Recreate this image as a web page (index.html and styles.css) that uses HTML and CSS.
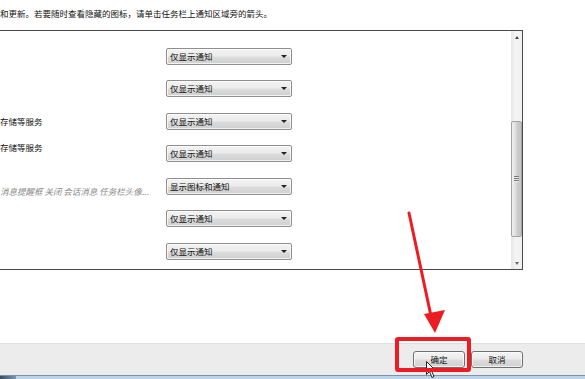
FILE: index.html
```html
<!DOCTYPE html>
<html lang="zh-CN">
<head>
<meta charset="utf-8">
<title>通知区域图标</title>
<link rel="stylesheet" href="styles.css">
</head>
<body>
<div class="page">
  <p class="intro">和更新。若要随时查看隐藏的图标，请单击任务栏上通知区域旁的箭头。</p>
  <div class="listbox">
    <div class="list">
      <div class="row"><span class="label"></span><div class="combo">仅显示通知<i class="caret"></i></div></div>
      <div class="row"><span class="label"></span><div class="combo">仅显示通知<i class="caret"></i></div></div>
      <div class="row"><span class="label">存储等服务</span><div class="combo">仅显示通知<i class="caret"></i></div></div>
      <div class="row"><span class="label label--up">存储等服务</span><div class="combo">仅显示通知<i class="caret"></i></div></div>
      <div class="row"><span class="label label--down label--hint">消息提醒框 关闭 会话消息 任务栏头像...</span><div class="combo">显示图标和通知<i class="caret"></i></div></div>
      <div class="row"><span class="label"></span><div class="combo">仅显示通知<i class="caret"></i></div></div>
      <div class="row"><span class="label"></span><div class="combo">仅显示通知<i class="caret"></i></div></div>
    </div>
    <div class="scrollbar">
      <div class="sb-btn"><i class="sb-arrow sb-arrow--up"></i></div>
      <div class="sb-track">
        <div class="sb-space sb-space--before"></div>
        <div class="sb-thumb"><span class="grip"></span></div>
        <div class="sb-space"></div>
      </div>
      <div class="sb-btn"><i class="sb-arrow sb-arrow--down"></i></div>
    </div>
  </div>
  <div class="spacer"></div>
  <div class="footer">
    <button class="btn" type="button">确定</button>
    <button class="btn" type="button">取消</button>
  </div>
  <div class="taskbar"><span class="taskbar-start"></span></div>

  <svg class="cursor" width="12" height="18" viewBox="0 0 12 18">
    <path d="M0.5 0.5 L0.5 13.5 L3.5 10.5 L6 16.5 L8 15.5 L5.5 9.8 L9.8 9.8 Z" fill="#fff" stroke="#222" stroke-width="1"/>
  </svg>
  <svg class="annotation" width="585" height="379" viewBox="0 0 585 379">
    <line x1="409" y1="213" x2="431" y2="316" stroke="#ec1c24" stroke-width="3" stroke-linecap="round"/>
    <polygon points="424,314 445,310 435,333" fill="#ec1c24"/>
    <rect x="397" y="339" width="72" height="31" rx="1" fill="none" stroke="#ec1c24" stroke-width="4"/>
  </svg>
</div>
</body>
</html>
```

FILE: styles.css
```css
* { box-sizing: border-box; }

html, body {
  margin: 0;
  padding: 0;
  background: #fff;
}

body {
  font-family: "Noto Sans CJK SC", "Noto Sans", sans-serif;
  font-size: 8.5px;
  color: #000;
  overflow: hidden;
}

.page {
  position: relative;
  width: 585px;
  height: 379px;
  display: flex;
  flex-direction: column;
  overflow: hidden;
  background: #fff;
}

.intro {
  margin: 0;
  height: 30px;
  padding-top: 7px;
  line-height: 12px;
  white-space: nowrap;
  color: #111;
}

.listbox {
  height: 240px;
  width: 524px;
  margin-left: -1px;
  border: 1px solid #4a4a4a;
  display: flex;
  background: #fff;
  flex: none;
}

.list {
  flex: 1;
  padding-top: 9px;
  display: flex;
  flex-direction: column;
}

.row {
  height: 32.5px;
  display: flex;
  align-items: center;
}

.label {
  width: 166px;
  white-space: nowrap;
  color: #111;
  line-height: 12px;
}

.label--up { margin-bottom: 14px; }
.label--down { margin-top: 10px; }
.label--hint {
  font-style: italic;
  color: #8a8a8a;
}

.combo {
  width: 126px;
  height: 17px;
  border: 1px solid #8e8f8f;
  border-radius: 2px;
  background: linear-gradient(to bottom, #f3f3f3 0%, #ebebeb 48%, #dddddd 52%, #cfcfcf 100%);
  box-shadow: inset 0 0 0 1px rgba(255,255,255,0.7);
  padding-left: 3px;
  line-height: 15px;
  color: #111;
  display: flex;
  align-items: center;
  white-space: nowrap;
}

.caret {
  margin-left: auto;
  margin-right: 4px;
  width: 0;
  height: 0;
  border-left: 3px solid transparent;
  border-right: 3px solid transparent;
  border-top: 3px solid #222;
}

.scrollbar {
  width: 11px;
  display: flex;
  flex-direction: column;
  background: linear-gradient(to right, #e6e6e6, #f4f4f4 40%, #f0f0f0);
}

.sb-btn {
  height: 12px;
  display: flex;
  align-items: center;
  justify-content: center;
}

.sb-arrow {
  width: 0;
  height: 0;
  border-left: 2.5px solid transparent;
  border-right: 2.5px solid transparent;
}
.sb-arrow--up { border-bottom: 3px solid #444; }
.sb-arrow--down { border-top: 3px solid #666; }

.sb-track {
  flex: 1;
  display: flex;
  flex-direction: column;
}

.sb-space { flex: 1; }
.sb-space--before { flex: none; height: 78px; }

.sb-thumb {
  height: 116px;
  border: 1px solid #a3a3a3;
  border-radius: 2px;
  background: linear-gradient(to right, #f0f0f0 0%, #dcdcdc 45%, #cdcdcd 55%, #c4c4c4 100%);
  display: flex;
  align-items: center;
  justify-content: center;
}

.grip {
  width: 5px;
  height: 6px;
  background: repeating-linear-gradient(to bottom, #777 0 1px, #e8e8e8 1px 2px);
}

.spacer { flex: 1; }

.footer {
  height: 32px;
  flex: none;
  background: #ececec;
  border-top: 1px solid #dfdfdf;
  display: flex;
  justify-content: flex-end;
  align-items: flex-start;
  gap: 6px;
  padding: 7px 62px 0 0;
}

.btn {
  width: 52px;
  height: 17px;
  padding: 0;
  margin: 0;
  font-family: inherit;
  font-size: 8.5px;
  color: #111;
  border: 1px solid #707070;
  border-radius: 3px;
  background: linear-gradient(to bottom, #f4f4f4 0%, #ebebeb 48%, #dcdcdc 52%, #d0d0d0 100%);
  box-shadow: inset 0 0 0 1px rgba(255,255,255,0.7);
  line-height: 15px;
}

.taskbar {
  height: 4px;
  flex: none;
  background: #bcd3ea;
  border-top: 1px solid #7e93ab;
  display: flex;
}

.taskbar-start {
  width: 16px;
  background: linear-gradient(to right, #3b4c62, #7d97b5);
}

.cursor {
  position: absolute;
  left: 426px;
  top: 361px;
}

.annotation {
  position: absolute;
  left: 0;
  top: 0;
  pointer-events: none;
}
```
